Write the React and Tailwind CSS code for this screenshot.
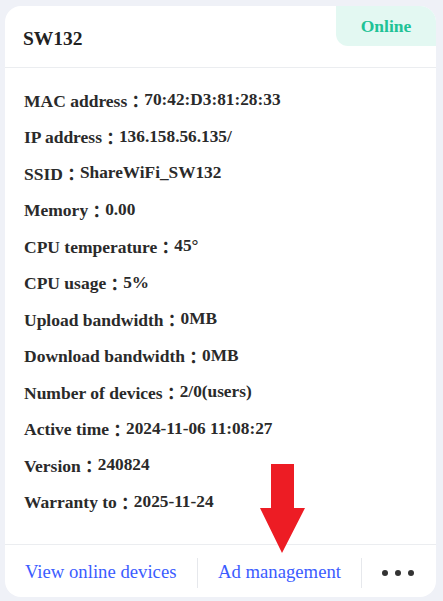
const rows = [
    ['MAC address', '70:42:D3:81:28:33'],
    ['IP address', '136.158.56.135/'],
    ['SSID', 'ShareWiFi_SW132'],
    ['Memory', '0.00'],
    ['CPU temperature', '45°'],
    ['CPU usage', '5%'],
    ['Upload bandwidth', '0MB'],
    ['Download bandwidth', '0MB'],
    ['Number of devices', '2/0(users)'],
    ['Active time', '2024-11-06 11:08:27'],
    ['Version', '240824'],
    ['Warranty to', '2025-11-24'],
];

export default function App() {
    return (
        <div className="w-[443px] h-[601px] bg-[#eff1f7] pt-[6px] pl-[5px] pr-[7px] pb-[4px] relative" style={{ fontFamily: '"Liberation Serif", "Noto Sans CJK SC", serif' }}>
            <div className="bg-white rounded-2xl h-full flex flex-col overflow-hidden">
                <div className="flex items-start justify-between h-[62px] border-b border-[#ebedf0] shrink-0">
                    <div className="pl-[18px] pt-[20px] text-[19.5px] leading-[26px] font-bold text-[#222]">SW132</div>
                    <div className="w-[100px] h-[40px] bg-[#e3f8f2] rounded-bl-xl flex items-center justify-center text-[17.5px] font-bold text-[#20c296]">
                        Online
                    </div>
                </div>
                <div className="flex-1 pl-[19px] pt-[21px] flex flex-col gap-[12.5px]">
                    {rows.map(([label, value]) => (
                        <div key={label} className="h-[24px] flex items-center font-bold text-[#2a2a2a] whitespace-nowrap">
                            <span className="text-[17.5px]">{label}</span>
                            <span className="text-[17px] font-['Noto_Sans_CJK_JP',sans-serif]">：</span>
                            <span className="text-[17.3px] -translate-y-[1px]">{value}</span>
                        </div>
                    ))}
                </div>
                <div className="h-[53px] pt-[3px] border-t border-[#ebedf0] flex items-center shrink-0 text-[18.7px] text-[#3b5cff]">
                    <div className="w-[192px] pl-[20px]">View online devices</div>
                    <div className="w-px h-[30px] bg-[#e6e8ec]"></div>
                    <div className="w-[163px] text-center">Ad management</div>
                    <div className="w-px h-[30px] bg-[#e6e8ec]"></div>
                    <div className="flex-1 flex justify-center gap-[7px] pr-[2px]">
                        <span className="w-[6px] h-[6px] rounded-full bg-[#333]"></span>
                        <span className="w-[6px] h-[6px] rounded-full bg-[#333]"></span>
                        <span className="w-[6px] h-[6px] rounded-full bg-[#333]"></span>
                    </div>
                </div>
            </div>
            <svg className="absolute left-[260px] top-[464px]" width="46" height="90" viewBox="0 0 46 90">
                <polygon points="11,0 34,0 34,44 45,44 22,89 0,44 11,44" fill="#ed1c24" />
            </svg>
        </div>
    );
}
